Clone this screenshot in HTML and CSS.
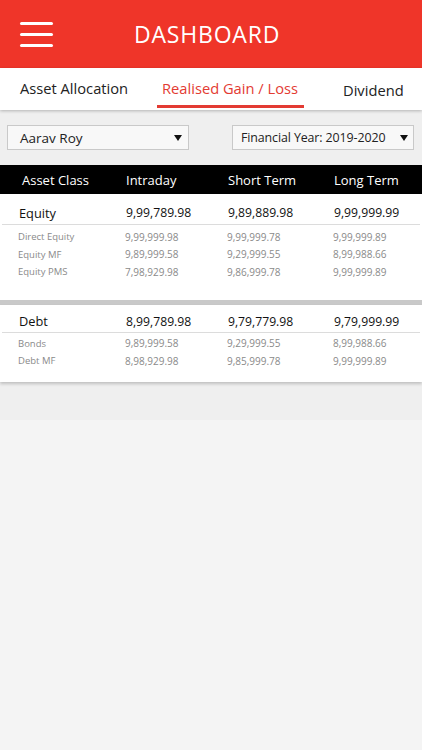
FILE: index.html
```html
<!DOCTYPE html>
<html lang="en">

<head>
    <meta charset="UTF-8">
    <meta name="viewport" content="width=device-width, initial-scale=1.0">
    <title>Dashboard</title>
    <link rel="stylesheet" href="styles.css">
</head>

<body>
    <header class="topbar">
        <div class="menu">
            <span></span>
            <span></span>
            <span></span>
        </div>
        <h1>DASHBOARD</h1>
    </header>

    <nav class="tabs">
        <div class="tab tab-first">Asset Allocation</div>
        <div class="tab active">Realised Gain / Loss</div>
        <div class="tab tab-last">Dividend</div>
    </nav>

    <div class="filters">
        <div class="select select-name">
            <span>Aarav Roy</span>
            <span class="caret"></span>
        </div>
        <div class="select select-year">
            <span>Financial Year: 2019-2020</span>
            <span class="caret"></span>
        </div>
    </div>

    <div class="table-head">
        <div>Asset Class</div>
        <div>Intraday</div>
        <div>Short Term</div>
        <div>Long Term</div>
    </div>

    <section class="card card-equity">
        <div class="row main">
            <div>Equity</div>
            <div>9,99,789.98</div>
            <div>9,89,889.98</div>
            <div>9,99,999.99</div>
        </div>
        <div class="row sub">
            <div>Direct Equity</div>
            <div>9,99,999.98</div>
            <div>9,99,999.78</div>
            <div>9,99,999.89</div>
        </div>
        <div class="row sub">
            <div>Equity MF</div>
            <div>9,89,999.58</div>
            <div>9,29,999.55</div>
            <div>8,99,988.66</div>
        </div>
        <div class="row sub">
            <div>Equity PMS</div>
            <div>7,98,929.98</div>
            <div>9,86,999.78</div>
            <div>9,99,999.89</div>
        </div>
    </section>

    <section class="card card-debt">
        <div class="row main">
            <div>Debt</div>
            <div>8,99,789.98</div>
            <div>9,79,779.98</div>
            <div>9,79,999.99</div>
        </div>
        <div class="row sub">
            <div>Bonds</div>
            <div>9,89,999.58</div>
            <div>9,29,999.55</div>
            <div>8,99,988.66</div>
        </div>
        <div class="row sub">
            <div>Debt MF</div>
            <div>8,98,929.98</div>
            <div>9,85,999.78</div>
            <div>9,99,999.89</div>
        </div>
    </section>

    <div class="spacer"></div>
</body>

</html>
```

FILE: styles.css
```css
body {
    margin: 0;
    background-color: #f4f4f4;
    font-family: "Open Sans", Arial, sans-serif;
    color: #222;
}

.topbar {
    background-color: #ef3529;
    height: 68px;
    display: flex;
    align-items: center;
}

.menu {
    margin-left: 20px;
    width: 33px;
    display: flex;
    flex-direction: column;
    gap: 8px;
}

.menu span {
    display: block;
    height: 3px;
    background-color: white;
    border-radius: 2px;
}

.topbar h1 {
    margin: 0 0 0 81px;
    color: white;
    font-size: 23px;
    font-weight: 500;
    letter-spacing: 0.8px;
}

.tabs {
    background-color: white;
    height: 42px;
    display: flex;
    box-shadow: 0 1px 3px rgba(0, 0, 0, 0.25);
    position: relative;
}

.tab {
    font-size: 14.7px;
    color: #222;
    padding-top: 10px;
}

.tab-first {
    margin-left: 20px;
    width: 137px;
}

.active {
    color: #e33b33;
    width: 147px;
    padding-left: 5px;
    box-sizing: border-box;
    border-bottom: 3px solid #e33b33;
    height: 40px;
}

.tab-last {
    margin-left: 39px;
    padding-top: 12px;
}

.filters {
    background-color: #efefef;
    display: flex;
    justify-content: space-between;
    padding: 15px 8px 15px 7px;
}

.select {
    width: 182px;
    height: 25px;
    box-sizing: border-box;
    border: 1px solid #c9c9c9;
    background-color: #f8f8f8;
    display: flex;
    align-items: center;
    justify-content: space-between;
    font-size: 13.5px;
    color: #222;
    white-space: nowrap;
}

.select-name {
    padding: 0 6px 0 12px;
}

.select-year {
    padding: 0 5px 0 8px;
    font-size: 12.4px;
    letter-spacing: -0.1px;
}

.caret {
    width: 0;
    height: 0;
    border-left: 4.5px solid transparent;
    border-right: 4.5px solid transparent;
    border-top: 6px solid #111;
}

.table-head,
.row {
    display: grid;
    grid-template-columns: 107px 102px 106px 1fr;
    align-items: center;
}

.table-head {
    background-color: #000;
    color: white;
    height: 29px;
    padding-left: 19px;
    font-size: 13px;
}

.table-head div:first-child {
    padding-left: 3px;
}

.card {
    background-color: white;
}

.card-equity {
    padding-bottom: 19px;
    border-bottom: 5px solid #c9c9c9;
}

.card-debt {
    padding-bottom: 12px;
    box-shadow: 0 2px 3px rgba(0, 0, 0, 0.2);
    position: relative;
}

.main {
    box-sizing: border-box;
    font-size: 12.2px;
    color: #111;
    height: 31px;
    padding-top: 7px;
    padding-left: 17px;
    border-bottom: 1px solid #dcdcdc;
    margin: 0 2px 3px 2px;
}

.main div:first-child {
    font-size: 12.8px;
}

.card-debt .main {
    height: 28px;
    padding-top: 6px;
    margin-bottom: 2px;
}

.sub {
    font-size: 10px;
    color: #8a8a8a;
    height: 17.5px;
    padding-left: 18px;
}

.sub div:first-child {
    font-size: 9.5px;
}

.spacer {
    background-color: #efefef;
    height: 38px;
}
```
